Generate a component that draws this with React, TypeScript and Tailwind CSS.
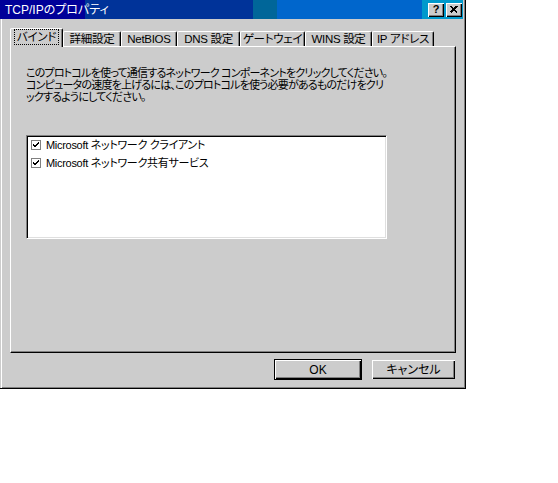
import React from 'react'

const font = "[font-family:'Liberation_Sans','Noto_Sans_CJK_JP',sans-serif] [font-feature-settings:'palt']"

const tabs = [
  { label: 'バインド', w: 'w-[53px]', active: true },
  { label: '詳細設定', w: 'w-[58px]' },
  { label: 'NetBIOS', w: 'w-[56px]' },
  { label: 'DNS 設定', w: 'w-[63px]' },
  { label: 'ゲートウェイ', w: 'w-[65px]' },
  { label: 'WINS 設定', w: 'w-[67px]' },
  { label: 'IP アドレス', w: 'w-[62px]' }
]

const raised = 'bg-[#cccccc] shadow-[inset_1px_1px_#ffffff,inset_-1px_-1px_#000000,inset_-2px_-2px_#808080]'

function Check() {
  return (
    <svg width="10" height="10" viewBox="0 0 10 10" shapeRendering="crispEdges" className="shrink-0">
      <rect x="0.5" y="0.5" width="9" height="9" fill="#ffffff" stroke="#808080" />
      <path d="M2 4.5 L4 6.5 L8 2.5" fill="none" stroke="#000000" strokeWidth="2" />
    </svg>
  )
}

export default function App() {
  return (
    <div className={`h-[483px] w-[558px] bg-white text-[12px] text-black ${font}`}>
      <div className="flex h-[389px] w-[466px] flex-col border-r border-b border-black bg-[#cccccc] shadow-[inset_1px_0_#cccccc,inset_2px_0_#ffffff,inset_-1px_-1px_#808080]">
        {/* title bar */}
        <div className="mr-[2px] flex h-[19px] items-center bg-[linear-gradient(to_right,#000099_0_85px,#003399_85px_253px,#006699_253px_277px,#0066cc_277px_422px,#0099cc_422px)] pr-[1px] pl-[5px]">
          <span className="leading-none text-white">TCP/IPのプロパティ</span>
          <div className="ml-auto flex gap-[2px]">
            <div className={`flex h-[14px] w-[16px] items-center justify-center text-[11px] leading-none font-bold ${raised}`}>
              ?
            </div>
            <div className={`flex h-[14px] w-[16px] items-center justify-center ${raised}`}>
              <svg width="8" height="7" viewBox="0 0 8 7" shapeRendering="crispEdges">
                <path d="M0.5 0 L7 6.5 M7 0 L0.5 6.5" stroke="#000000" strokeWidth="1.6" />
              </svg>
            </div>
          </div>
        </div>

        <div className="flex flex-col pt-[9px] pr-[9px] pl-[10px]">
          {/* tabs */}
          <div className="flex h-[18px] items-end text-[11.5px]">
            {tabs.map((t) => (
              <div
                key={t.label}
                className={`flex shrink-0 items-center justify-center rounded-t-[2px] border-t border-l border-r border-t-white border-l-white border-r-black bg-[#cccccc] shadow-[inset_-1px_0_#808080] ${t.w} ${
                  t.active ? 'relative z-10 -mb-[1px] h-[19px] pb-[2px]' : 'h-[15px]'
                }`}
              >
                <span
                  className={`leading-[12px] tracking-[-0.3px] whitespace-nowrap ${
                    t.active ? 'px-[2px] py-[1px] outline-1 outline-black outline-dotted' : ''
                  }`}
                >
                  {t.label}
                </span>
              </div>
            ))}
          </div>

          {/* panel */}
          <div className="h-[307px] border border-t-white border-l-white border-r-black border-b-black pt-[20px] pl-[15px] shadow-[inset_-1px_-1px_#808080]">
            <p className="text-[11px] leading-[12px] tracking-[-0.8px] whitespace-nowrap">
              このプロトコルを使って通信するネットワーク コンポーネントをクリックしてください。
              <br />
              コンピュータの速度を上げるには、このプロトコルを使う必要があるものだけをクリ
              <br />
              ックするようにしてください。
            </p>
            <div className="mt-[32px] h-[104px] w-[361px] border border-t-[#808080] border-l-[#808080] border-r-white border-b-white bg-white pl-[2px] shadow-[inset_1px_1px_#000000,inset_-1px_-1px_#dfdfdf]">
              {['Microsoft ネットワーク クライアント', 'Microsoft ネットワーク共有サービス'].map((item) => (
                <div key={item} className="flex h-[18px] items-center gap-[5px] pl-[2px]">
                  <Check />
                  <span className="text-[11px] leading-none tracking-[-0.3px] whitespace-nowrap">{item}</span>
                </div>
              ))}
            </div>
          </div>

          {/* buttons */}
          <div className="mt-[6px] flex items-start justify-end gap-[10px] pr-[1px]">
            <div className="h-[21px] w-[88px] border border-black">
              <div className={`flex h-full w-full items-center justify-center ${raised}`}>OK</div>
            </div>
            <div className={`mt-[1px] flex h-[19px] w-[83px] items-center justify-center ${raised}`}>キャンセル</div>
          </div>
        </div>
      </div>
    </div>
  )
}
